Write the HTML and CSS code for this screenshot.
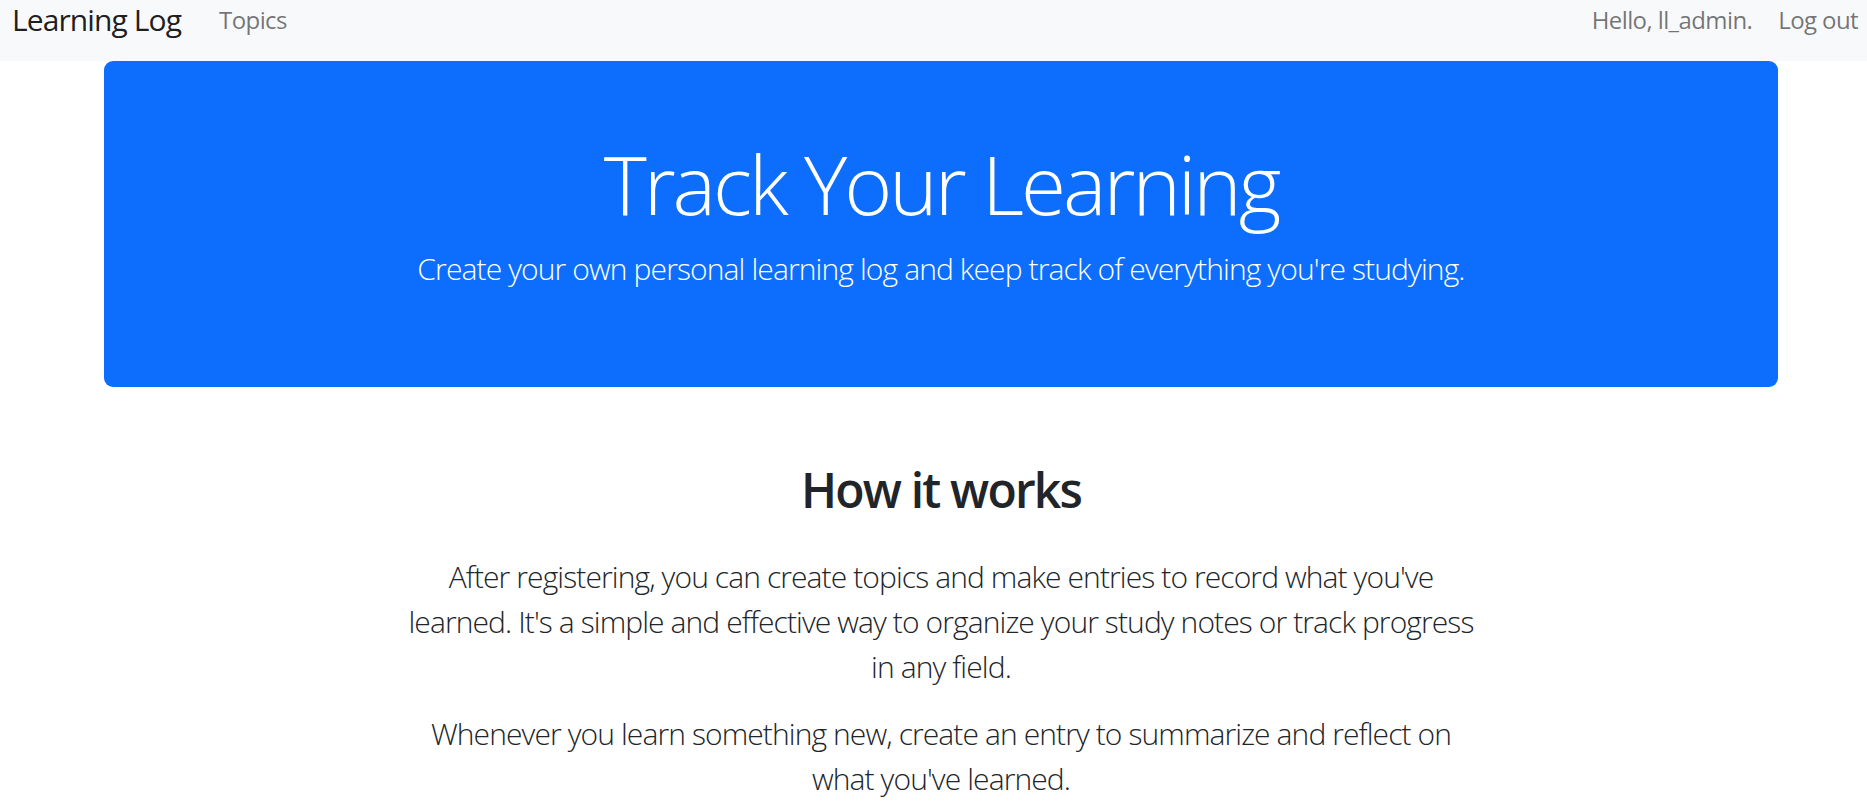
FILE: index.html
```html
<!DOCTYPE html>
<html lang="en">
<head>
<meta charset="utf-8">
<title>Learning Log</title>
<link rel="stylesheet" href="styles.css">
</head>
<body>
<nav class="navbar">
  <div class="nav-left">
    <a class="brand" href="#">Learning Log</a>
    <a class="nav-link" href="#">Topics</a>
  </div>
  <div class="nav-right">
    <span class="nav-text">Hello, ll_admin.</span>
    <a class="nav-link" href="#">Log out</a>
  </div>
</nav>
<main class="container">
  <section class="hero">
    <h1 class="hero-title">Track Your Learning</h1>
    <p class="lead">Create your own personal learning log and keep track of everything you're studying.</p>
  </section>
  <section class="about">
    <h2 class="about-title">How it works</h2>
    <p class="about-text">After registering, you can create topics and make entries to record what you've learned. It's a simple and effective way to organize your study notes or track progress in any field.</p>
    <p class="about-text">Whenever you learn something new, create an entry to summarize and reflect on what you've learned.</p>
  </section>
</main>
</body>
</html>
```
FILE: styles.css
```css
html, body {
  margin: 0;
  padding: 0;
}
body {
  font-family: "Open Sans", "Noto Sans", "Liberation Sans", sans-serif;
  color: #212529;
  background: #fff;
}
a {
  text-decoration: none;
}
.navbar {
  height: 61px;
  box-sizing: border-box;
  background: #f8f9fa;
  display: flex;
  justify-content: space-between;
  align-items: flex-start;
  padding: 2px 9px 0 12px;
}
.nav-left,
.nav-right {
  display: flex;
  align-items: flex-start;
}
.nav-left {
  gap: 38px;
}
.nav-right {
  gap: 26px;
}
.brand {
  font-size: 30px;
  line-height: 36px;
  letter-spacing: -0.9px;
  color: rgba(0, 0, 0, 0.9);
}
.nav-link,
.nav-text {
  font-size: 24px;
  line-height: 36px;
  letter-spacing: -0.6px;
  color: rgba(0, 0, 0, 0.55);
}
.container {
  width: 1674px;
  margin-left: 104px;
}
.hero {
  background: #0d6efd;
  border-radius: 9px;
  padding: 72px;
  color: #fff;
  text-align: center;
}
.hero-title {
  font-size: 82px;
  font-weight: 300;
  letter-spacing: -3px;
  line-height: 101px;
  margin: 0 0 12px;
}
.lead {
  font-size: 30px;
  font-weight: 300;
  letter-spacing: -0.88px;
  line-height: 45px;
  margin: 0 0 24px;
}
.about {
  text-align: center;
  width: 1078px;
  margin: 74px auto 0;
}
.about-title {
  font-size: 48px;
  font-weight: 600;
  letter-spacing: -1.8px;
  line-height: 58px;
  margin: 0 0 35px;
}
.about-text {
  font-size: 30px;
  font-weight: 300;
  letter-spacing: -0.9px;
  line-height: 45px;
  margin: 0 0 22px;
}
```
